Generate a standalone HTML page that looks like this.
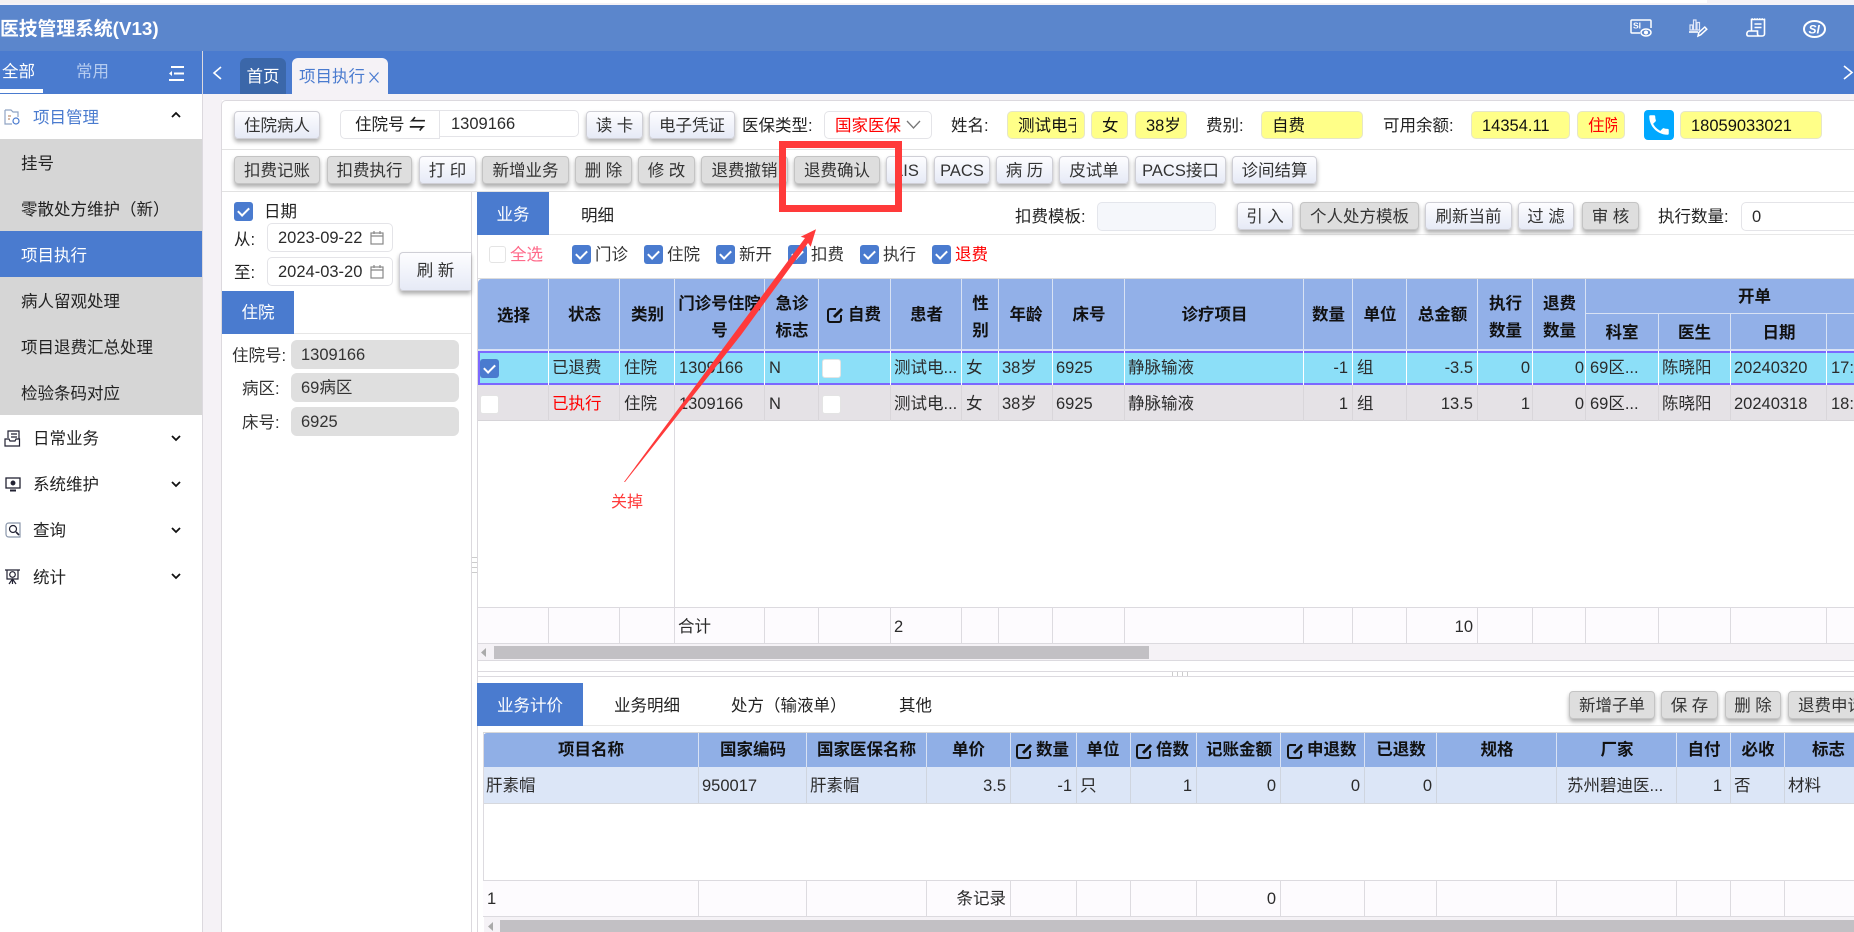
<!DOCTYPE html>
<html lang="zh"><head><meta charset="utf-8"><title>医技管理系统</title>
<style>
html,body{margin:0;padding:0;width:1854px;height:932px;overflow:hidden;background:#fff}
body{position:relative;font-family:"Liberation Sans","Noto Sans CJK SC",sans-serif;font-size:16.5px;color:#2b2b2b}
div{box-sizing:border-box}
.r{position:absolute}
.t{position:absolute;white-space:nowrap;line-height:24px;height:24px;margin-top:1px}
.e{text-align:right}
.h{font-weight:bold;color:#111;text-align:center}
.b{position:absolute;height:28px;border:1px solid #cfcfd6;border-radius:4px;background:linear-gradient(#fdfdff,#e6eaf6);box-shadow:0 3px 4px rgba(0,0,0,.32);text-align:center;line-height:28px;white-space:nowrap;color:#333;overflow:hidden}
.g{background:#dedede;border-color:#c4c4c4}
.y{position:absolute;top:111px;height:28px;background:#ffff88;border:1px solid #e6e6c8;border-radius:5px;line-height:28px;padding-left:10px;white-space:nowrap;overflow:hidden;color:#111}
.y span{display:inline-block;overflow:hidden;vertical-align:top}
.i{position:absolute;height:29px;border:1px solid #e4e4e8;border-radius:5px;background:#fff;line-height:29px;padding-left:10px;white-space:nowrap}
.q{position:absolute;left:291px;width:168px;height:29px;background:#dfdfdf;border-radius:6px;line-height:31px;padding-left:10px;color:#333}
.m{position:absolute;left:21px;white-space:nowrap;line-height:24px;color:#222;margin-top:1px}
.cb{position:absolute;width:19px;height:19px;border-radius:3px;background:#4a7bcf}
.cb:after{content:"";position:absolute;left:6px;top:3px;width:5px;height:9px;border:solid #fff;border-width:0 2px 2px 0;transform:rotate(45deg)}
.u{position:absolute;width:19px;height:19px;border-radius:3px;background:#fff;border:1px solid #e4e4e4}
svg{position:absolute;overflow:visible}
</style></head><body>

<!-- top strip -->
<div class="r" style="left:0;top:0;width:100px;height:5px;background:#f5f1f1"></div>
<div class="r" style="left:1707px;top:0;width:147px;height:5px;background:#f5f2f6"></div>
<div class="r" style="left:0;top:3px;width:1854px;height:2px;background:#f5f2f6"></div>
<!-- header -->
<div class="r" style="left:0;top:5px;width:1854px;height:46px;background:#5b86cc"></div>
<div class="t" style="left:0;top:16px;color:#fff;font-weight:bold;font-size:18.8px">医技管理系统(V13)</div>

<!-- header icons -->
<svg style="left:1630px;top:19px" width="22" height="18" viewBox="0 0 22 18" fill="none" stroke="#fff" stroke-width="1.5"><path d="M10 14H2c-.6 0-1-.4-1-1V2c0-.6.4-1 1-1h18c.6 0 1 .4 1 1v7"/><ellipse cx="16" cy="13.500" rx="5" ry="3.500"/><circle cx="16" cy="13.500" r="1.300" fill="#fff"/><text x="3" y="9.500" fill="#fff" stroke="none" font-size="8.500" font-weight="bold" font-family="Liberation Sans">SI</text></svg>
<svg style="left:1689px;top:19px" width="18" height="18" viewBox="0 0 18 18" fill="none" stroke="#fff" stroke-width="1.200"><path d="M1 6v5h2.500V6zM4.500 1v10h2.500V1zM8 3.500V11h2.500V3.500z" stroke="#dfe6f8"/><path d="M0 13h9" stroke-width="1.600"/><path d="M9 17l.8-3.500 6-5.500 2 2.200-6 5.500z" stroke-width="1.500"/></svg>
<svg style="left:1746px;top:18px" width="20" height="19" viewBox="0 0 20 19" fill="none" stroke="#fff" stroke-width="1.600"><path d="M5.500 13V1.500h13V16c0 1.200-1 2-2.200 2H2.500C1.300 18 .8 17 .8 16c0-1.500 1-3 2.200-3h8.500v3c0 1 .8 2 2 2"/><path d="M8.500 6h7M8.500 9.500h7"/><path d="M5.500 1h13" stroke-dasharray="1.500 1"/></svg>
<svg style="left:1803px;top:20px" width="23" height="18" viewBox="0 0 23 18" fill="none" stroke="#fff" stroke-width="2"><ellipse cx="11.500" cy="9" rx="10.500" ry="8"/><text x="5.500" y="13.500" fill="#fff" stroke="none" font-size="12" font-style="italic" font-weight="bold" font-family="Liberation Sans">SI</text></svg>

<!-- tab bar -->
<div class="r" style="left:0;top:51px;width:1854px;height:43px;background:#4a7bcf"></div>
<div class="r" style="left:202px;top:51px;width:1px;height:881px;background:#dcd9de"></div>
<svg style="left:212px;top:66px" width="10" height="14" fill="none" stroke="#fff" stroke-width="1.6"><path d="M9 1L2 7l7 6"/></svg>
<div class="r" style="left:240px;top:58px;width:46px;height:36px;background:#3b67a9;border-radius:6px 6px 0 0;color:#fff;text-align:center;line-height:38px">首页</div>
<div class="r" style="left:292px;top:58px;width:96px;height:36px;background:#f5f2f6;border-radius:6px 6px 0 0;color:#4a7bcf;line-height:38px;padding-left:7px;white-space:nowrap">项目执行</div>
<svg style="left:369px;top:72px" width="10" height="11" fill="none" stroke="#4a7bcf" stroke-width="1.200"><path d="M.5.500l9 10M9.500.500l-9 10"/></svg>
<svg style="left:1843px;top:65px" width="11" height="15" fill="none" stroke="#fff" stroke-width="1.6"><path d="M1 1l8 6.500L1 14"/></svg>

<!-- sidebar -->
<div class="t" style="left:2px;top:59px;color:#fff">全部</div>
<div class="t" style="left:76px;top:59px;color:#b4cbf0">常用</div>
<div class="r" style="left:0;top:89px;width:43px;height:4px;background:#fff"></div>
<svg style="left:168px;top:66px" width="17" height="16" fill="none" stroke="#fff" stroke-width="2"><path d="M3 1h13M6 7.500h10M1 14h15"/><path d="M4 5L1 7.500 4 10z" fill="#fff" stroke="none"/></svg>

<svg style="left:4px;top:109px" width="17" height="16" fill="none" stroke="#8fa4c4" stroke-width="1.2"><path d="M1 1h6l2 2h5v5M1 1v14h7"/><circle cx="12" cy="12" r="3" stroke="#4a7bcf"/><path d="M4 7h3M4 10h2" stroke="#c09070"/></svg>
<div class="t" style="left:33px;top:105px;color:#4a7bcf">项目管理</div>
<svg style="left:171px;top:112px" width="10" height="6" fill="none" stroke="#111" stroke-width="1.800"><path d="M1 5l4-4 4 4"/></svg>

<div class="r" style="left:0;top:139px;width:202px;height:276px;background:#d6d6d6"></div>
<div class="r" style="left:0;top:231px;width:202px;height:46px;background:#4a7bcf"></div>
<div class="m" style="top:151px">挂号</div>
<div class="m" style="top:197px">零散处方维护（新）</div>
<div class="m" style="top:243px;color:#fff">项目执行</div>
<div class="m" style="top:289px">病人留观处理</div>
<div class="m" style="top:335px">项目退费汇总处理</div>
<div class="m" style="top:381px">检验条码对应</div>

<svg style="left:4px;top:430px" width="17" height="17" fill="none" stroke="#223" stroke-width="1.200"><path d="M4 8V1h11v8M7 4h6M7 7h6"/><path d="M1 9h4l1 2h5l1-2h3.500v7H1z"/></svg>
<div class="t" style="left:33px;top:426px;color:#222">日常业务</div>
<svg style="left:171px;top:435px" width="10" height="6" fill="none" stroke="#111" stroke-width="1.800"><path d="M1 1l4 4 4-4"/></svg>

<svg style="left:5px;top:477px" width="16" height="15" fill="none" stroke="#223" stroke-width="1.300"><rect x="1" y="1" width="14" height="10"/><circle cx="8" cy="6" r="1.800" fill="#223"/><path d="M5 13.500h6" stroke-width="2"/></svg>
<div class="t" style="left:33px;top:472px;color:#222">系统维护</div>
<svg style="left:171px;top:481px" width="10" height="6" fill="none" stroke="#111" stroke-width="1.800"><path d="M1 1l4 4 4-4"/></svg>

<svg style="left:5px;top:522px" width="16" height="16" fill="none" stroke="#223" stroke-width="1.200"><path d="M4 1h11v14H4c-2 0-3-1-3-3V4c0-2 1-3 3-3z" stroke="#8a97ab"/><circle cx="8" cy="7" r="3.500"/><path d="M11 10l3 3" stroke-width="1.600"/></svg>
<div class="t" style="left:33px;top:518px;color:#222">查询</div>
<svg style="left:171px;top:527px" width="10" height="6" fill="none" stroke="#111" stroke-width="1.800"><path d="M1 1l4 4 4-4"/></svg>

<svg style="left:4px;top:568px" width="17" height="17" fill="none" stroke="#223" stroke-width="1.200"><path d="M1 2h15M3 2v9h11V2"/><circle cx="8.500" cy="6.500" r="2.800"/><path d="M8.500 11v5M5 16l3.500-5 3.500 5"/></svg>
<div class="t" style="left:33px;top:565px;color:#222">统计</div>
<svg style="left:171px;top:573px" width="10" height="6" fill="none" stroke="#111" stroke-width="1.800"><path d="M1 1l4 4 4-4"/></svg>

<!-- gutter -->
<div class="r" style="left:203px;top:94px;width:19px;height:838px;background:#f5f2f6"></div>
<div class="r" style="left:203px;top:94px;width:1651px;height:6px;background:#f5f2f6"></div>
<div class="r" style="left:221px;top:100px;width:1633px;height:832px;background:#fff;border-left:1px solid #dcd9de;border-top:1px solid #dcd9de;border-top-left-radius:5px"></div>
<div class="r" style="left:222px;top:149px;width:1632px;height:1px;background:#e2e2e2"></div>
<div class="r" style="left:222px;top:191px;width:1632px;height:1px;background:#e2e2e2"></div>

<!-- row 1 -->
<div class="b" style="left:234px;top:111px;width:86px">住院病人</div>
<div class="i" style="left:340px;top:110px;width:100px;border-radius:5px 0 0 5px;padding-left:14px;color:#222">住院号 <b>⇋</b></div>
<div class="i" style="left:440px;top:110px;width:139px;height:27px;border-left:0;border-radius:0 5px 5px 0;line-height:27px;padding-left:11px">1309166</div>
<div class="b" style="left:586px;top:111px;width:57px">读 卡</div>
<div class="b" style="left:649px;top:111px;width:86px">电子凭证</div>
<div class="t" style="left:742px;top:113px;color:#222">医保类型:</div>
<div class="i" style="left:824px;top:111px;width:108px;height:28px;color:#f00;line-height:28px">国家医保</div>
<svg style="left:906px;top:120px" width="15" height="9" fill="none" stroke="#777" stroke-width="1.300"><path d="M1 1l6.500 7L14 1"/></svg>
<div class="t" style="left:951px;top:113px;color:#222">姓名:</div>
<div class="y" style="left:1007px;width:78px"><span style="width:58px">测试电子</span></div>
<div class="y" style="left:1091px;width:37px">女</div>
<div class="y" style="left:1135px;width:52px">38岁</div>
<div class="t" style="left:1206px;top:113px;color:#222">费别:</div>
<div class="y" style="left:1261px;width:102px">自费</div>
<div class="t" style="left:1383px;top:113px;color:#222">可用余额:</div>
<div class="y" style="left:1471px;width:99px">14354.11</div>
<div class="y" style="left:1577px;width:48px;color:#f00"><span style="width:29px">住院</span></div>
<div class="r" style="left:1644px;top:110px;width:30px;height:30px;background:#00a8ff;border-radius:4px"></div>
<svg style="left:1646px;top:112px" width="26" height="26" viewBox="0 0 24 24"><path fill="#fff" d="M6.600 10.800c1.400 2.800 3.800 5.100 6.600 6.600l2.200-2.200c.3-.3.7-.4 1-.2 1.100.4 2.300.6 3.600.6.600 0 1 .4 1 1V20c0 .6-.4 1-1 1C10.600 21 3 13.400 3 4c0-.6.4-1 1-1h3.500c.6 0 1 .4 1 1 0 1.300.2 2.500.6 3.600.1.300 0 .7-.2 1z"/></svg>
<div class="y" style="left:1680px;width:142px">18059033021</div>

<!-- row 2 -->
<div class="b g" style="left:234px;top:156px;width:86px">扣费记账</div>
<div class="b g" style="left:327px;top:156px;width:85px">扣费执行</div>
<div class="b" style="left:419px;top:156px;width:57px">打 印</div>
<div class="b g" style="left:482px;top:156px;width:87px">新增业务</div>
<div class="b g" style="left:575px;top:156px;width:57px">删 除</div>
<div class="b g" style="left:638px;top:156px;width:57px">修 改</div>
<div class="b g" style="left:701px;top:156px;width:87px">退费撤销</div>
<div class="b g" style="left:794px;top:156px;width:86px">退费确认</div>
<div class="b" style="left:886px;top:156px;width:41px">LIS</div>
<div class="b" style="left:934px;top:156px;width:56px">PACS</div>
<div class="b" style="left:996px;top:156px;width:57px">病 历</div>
<div class="b" style="left:1059px;top:156px;width:70px">皮试单</div>
<div class="b" style="left:1135px;top:156px;width:91px">PACS接口</div>
<div class="b" style="left:1232px;top:156px;width:85px">诊间结算</div>

<!-- left panel -->
<div class="r" style="left:471px;top:192px;width:1px;height:740px;background:#dcd9de"></div>
<div class="r" style="left:477px;top:192px;width:1px;height:740px;background:#dcd9de"></div>
<div class="r" style="left:472px;top:557px;width:5px;height:18px;background:repeating-linear-gradient(#ccc 0 1px,#fff 1px 5px)"></div>
<div class="cb" style="left:234px;top:202px"></div>
<div class="t" style="left:264px;top:199px;color:#222">日期</div>
<div class="t" style="left:234px;top:227px;color:#222">从:</div>
<div class="i" style="left:267px;top:223px;width:126px">2023-09-22</div>
<svg style="left:370px;top:230px" width="14" height="15" fill="none" stroke="#888" stroke-width="1.200"><rect x="1" y="3" width="12" height="11"/><path d="M1 6h12M4 1v3M10 1v3"/></svg>
<div class="t" style="left:234px;top:260px;color:#222">至:</div>
<div class="i" style="left:267px;top:257px;width:126px">2024-03-20</div>
<svg style="left:370px;top:264px" width="14" height="15" fill="none" stroke="#888" stroke-width="1.200"><rect x="1" y="3" width="12" height="11"/><path d="M1 6h12M4 1v3M10 1v3"/></svg>
<div class="b" style="left:399px;top:252px;width:72px;height:39px;line-height:36px;border-right:0;border-radius:4px 0 0 4px">刷 新</div>
<div class="r" style="left:222px;top:291px;width:72px;height:43px;background:#4a7bcf;color:#fff;text-align:center;line-height:44px">住院</div>
<div class="r" style="left:294px;top:333px;width:177px;height:1px;background:#e6e6e6"></div>
<div class="t" style="left:232px;top:343px;color:#333">住院号:</div>
<div class="q" style="top:340px">1309166</div>
<div class="t" style="left:242px;top:376px;color:#333">病区:</div>
<div class="q" style="top:373px">69病区</div>
<div class="t" style="left:242px;top:410px;color:#333">床号:</div>
<div class="q" style="top:407px">6925</div>

<!-- right tabs -->
<div class="r" style="left:477px;top:192px;width:72px;height:43px;background:#4a7bcf;color:#fff;text-align:center;line-height:47px">业务</div>
<div class="t" style="left:581px;top:203px;color:#222">明细</div>
<div class="r" style="left:549px;top:234px;width:1305px;height:1px;background:#e8e8e8"></div>
<div class="t" style="left:1015px;top:204px;color:#222">扣费模板:</div>
<div class="r" style="left:1097px;top:202px;width:119px;height:29px;background:#f5f7fb;border:1px solid #e4e6ec;border-radius:5px"></div>
<div class="b" style="left:1237px;top:202px;width:56px">引 入</div>
<div class="b g" style="left:1300px;top:202px;width:119px">个人处方模板</div>
<div class="b" style="left:1425px;top:202px;width:87px">刷新当前</div>
<div class="b" style="left:1518px;top:202px;width:56px">过 滤</div>
<div class="b g" style="left:1582px;top:202px;width:57px">审 核</div>
<div class="t" style="left:1658px;top:204px;color:#222">执行数量:</div>
<div class="i" style="left:1741px;top:202px;width:130px">0</div>

<!-- checkbox row -->
<div class="u" style="left:489px;top:246px;width:17px;height:17px"></div>
<div class="t" style="left:510px;top:242px;color:#ff6a8a">全选</div>
<div class="cb" style="left:572px;top:245px"></div><div class="t" style="left:595px;top:242px;color:#333">门诊</div>
<div class="cb" style="left:644px;top:245px"></div><div class="t" style="left:667px;top:242px;color:#333">住院</div>
<div class="cb" style="left:716px;top:245px"></div><div class="t" style="left:739px;top:242px;color:#333">新开</div>
<div class="cb" style="left:788px;top:245px"></div><div class="t" style="left:811px;top:242px;color:#333">扣费</div>
<div class="cb" style="left:860px;top:245px"></div><div class="t" style="left:883px;top:242px;color:#333">执行</div>
<div class="cb" style="left:932px;top:245px"></div><div class="t" style="left:955px;top:242px;color:#f00">退费</div>

<!-- table 1 backgrounds -->
<div class="r" style="left:478px;top:278px;width:1376px;height:1px;background:#dcdcdc"></div>
<div class="r" style="left:478px;top:279px;width:1376px;height:70px;background:#92b0e8;border-radius:4px 0 0 0"></div>
<div class="r" style="left:478px;top:351px;width:1376px;height:34px;background:#8cdff8;border-top:2px solid #7b68ff;border-bottom:2px solid #7b68ff;border-left:2px solid #7b68ff"></div>
<div class="r" style="left:478px;top:385px;width:1376px;height:36px;background:#e5e2e6;border-bottom:1px solid #d6d4d8"></div>
<div class="r" style="left:478px;top:607px;width:1376px;height:37px;background:#fdfbfe;border-top:1px solid #dcdadf;border-bottom:1px solid #dcdadf"></div>
<div class="r" style="left:478px;top:644px;width:1376px;height:17px;background:#f5f2f6;border-bottom:1px solid #dcdadf"></div>
<div class="r" style="left:494px;top:646px;width:655px;height:13px;background:#c2c0c4"></div>
<svg style="left:481px;top:648px" width="6" height="9"><path d="M5 0L0 4.500 5 9z" fill="#aaa"/></svg>
<div class="r" style="left:478px;top:671px;width:1376px;height:6px;border-top:1px solid #dcdadf;border-bottom:1px solid #dcdadf"></div>
<div class="r" style="left:1172px;top:672px;width:17px;height:4px;background:repeating-linear-gradient(90deg,#ccc 0 1px,#fff 1px 5px)"></div>

<svg style="left:0;top:0" width="1854" height="932" fill="none" shape-rendering="crispEdges">
<path stroke="#d8e2f4" d="M548.500 279V349M619.500 279V349M674.500 279V349M764.500 279V349M818.500 279V349M890.500 279V349M961.500 279V349M998.500 279V349M1052.500 279V349M1124.500 279V349M1303.500 279V349M1352.500 279V349M1406.500 279V349M1477.500 279V349M1532.500 279V349M1585.500 279V349M1658.500 313V349M1730.500 313V349M1826.500 313V349M1586 313.500H1854"/>
<path stroke="#d8e2f4" d="M478 349.500H1854M478 350.500H1854"/>
<path stroke="#fff" d="M548.500 351V385M619.500 351V385M674.500 351V385M764.500 351V385M818.500 351V385M890.500 351V385M961.500 351V385M998.500 351V385M1052.500 351V385M1124.500 351V385M1303.500 351V385M1352.500 351V385M1406.500 351V385M1477.500 351V385M1532.500 351V385M1585.500 351V385M1658.500 351V385M1730.500 351V385M1826.500 351V385"/>
<path stroke="#d9d6da" d="M548.500 385V421M619.500 385V421M674.500 385V421M764.500 385V421M818.500 385V421M890.500 385V421M961.500 385V421M998.500 385V421M1052.500 385V421M1124.500 385V421M1303.500 385V421M1352.500 385V421M1406.500 385V421M1477.500 385V421M1532.500 385V421M1585.500 385V421M1658.500 385V421M1730.500 385V421M1826.500 385V421"/>
<path stroke="#dddbe0" d="M674.500 421V643M548.500 607V643M619.500 607V643M764.500 607V643M818.500 607V643M890.500 607V643M961.500 607V643M998.500 607V643M1052.500 607V643M1124.500 607V643M1303.500 607V643M1352.500 607V643M1406.500 607V643M1477.500 607V643M1532.500 607V643M1585.500 607V643M1658.500 607V643M1730.500 607V643M1826.500 607V643"/>
</svg>

<!-- table 1 header text -->
<div class="t h" style="left:478px;width:71px;top:303px">选择</div>
<div class="t h" style="left:549px;width:71px;top:302px">状态</div>
<div class="t h" style="left:620px;width:55px;top:302px">类别</div>
<div class="r" style="left:675px;top:291px;width:89px;text-align:center;font-weight:bold;color:#111;line-height:27px;overflow:hidden;height:54px;white-space:nowrap">门诊号住院<br>号</div>
<div class="r" style="left:765px;top:291px;width:54px;text-align:center;font-weight:bold;color:#111;line-height:27px">急诊<br>标志</div>
<svg style="left:827px;top:306px" width="17" height="17" fill="none" stroke="#111" stroke-width="2"><path d="M9 3H3c-1 0-2 1-2 2v9c0 1 1 2 2 2h9c1 0 2-1 2-2V9"/><path d="M7 11l8-8" stroke-width="3"/></svg>
<div class="t" style="left:848px;top:302px;font-weight:bold;color:#111">自费</div>
<div class="t h" style="left:891px;width:71px;top:302px">患者</div>
<div class="r" style="left:962px;top:291px;width:37px;text-align:center;font-weight:bold;color:#111;line-height:27px">性<br>别</div>
<div class="t h" style="left:999px;width:54px;top:302px">年龄</div>
<div class="t h" style="left:1053px;width:72px;top:302px">床号</div>
<div class="t h" style="left:1125px;width:179px;top:302px">诊疗项目</div>
<div class="t h" style="left:1304px;width:49px;top:302px">数量</div>
<div class="t h" style="left:1353px;width:54px;top:302px">单位</div>
<div class="t h" style="left:1407px;width:71px;top:302px">总金额</div>
<div class="r" style="left:1478px;top:291px;width:55px;text-align:center;font-weight:bold;color:#111;line-height:27px">执行<br>数量</div>
<div class="r" style="left:1533px;top:291px;width:53px;text-align:center;font-weight:bold;color:#111;line-height:27px">退费<br>数量</div>
<div class="t h" style="left:1586px;width:337px;top:284px">开单</div>
<div class="t h" style="left:1586px;width:72px;top:320px">科室</div>
<div class="t h" style="left:1658px;width:73px;top:320px">医生</div>
<div class="t h" style="left:1731px;width:96px;top:320px">日期</div>

<!-- table 1 row 1 -->
<div class="cb" style="left:480px;top:359px"></div>
<div class="t" style="left:552px;top:355px">已退费</div>
<div class="t" style="left:624px;top:355px">住院</div>
<div class="t" style="left:679px;top:355px">1309166</div>
<div class="t" style="left:769px;top:355px">N</div>
<div class="u" style="left:822px;top:359px"></div>
<div class="t" style="left:894px;top:355px">测试电...</div>
<div class="t" style="left:966px;top:355px">女</div>
<div class="t" style="left:1002px;top:355px">38岁</div>
<div class="t" style="left:1056px;top:355px">6925</div>
<div class="t" style="left:1128px;top:355px">静脉输液</div>
<div class="t e" style="left:1304px;width:44px;top:355px">-1</div>
<div class="t" style="left:1357px;top:355px">组</div>
<div class="t e" style="left:1407px;width:66px;top:355px">-3.5</div>
<div class="t e" style="left:1478px;width:52px;top:355px">0</div>
<div class="t e" style="left:1533px;width:51px;top:355px">0</div>
<div class="t" style="left:1590px;top:355px">69区...</div>
<div class="t" style="left:1662px;top:355px">陈晓阳</div>
<div class="t" style="left:1734px;top:355px">20240320</div>
<div class="t" style="left:1831px;top:355px">17:</div>

<!-- table 1 row 2 -->
<div class="u" style="left:480px;top:395px"></div>
<div class="t" style="left:552px;top:391px;color:#f00">已执行</div>
<div class="t" style="left:624px;top:391px">住院</div>
<div class="t" style="left:679px;top:391px">1309166</div>
<div class="t" style="left:769px;top:391px">N</div>
<div class="u" style="left:822px;top:395px"></div>
<div class="t" style="left:894px;top:391px">测试电...</div>
<div class="t" style="left:966px;top:391px">女</div>
<div class="t" style="left:1002px;top:391px">38岁</div>
<div class="t" style="left:1056px;top:391px">6925</div>
<div class="t" style="left:1128px;top:391px">静脉输液</div>
<div class="t e" style="left:1304px;width:44px;top:391px">1</div>
<div class="t" style="left:1357px;top:391px">组</div>
<div class="t e" style="left:1407px;width:66px;top:391px">13.5</div>
<div class="t e" style="left:1478px;width:52px;top:391px">1</div>
<div class="t e" style="left:1533px;width:51px;top:391px">0</div>
<div class="t" style="left:1590px;top:391px">69区...</div>
<div class="t" style="left:1662px;top:391px">陈晓阳</div>
<div class="t" style="left:1734px;top:391px">20240318</div>
<div class="t" style="left:1831px;top:391px">18:</div>

<!-- table 1 footer -->
<div class="t" style="left:678px;top:614px">合计</div>
<div class="t" style="left:894px;top:614px">2</div>
<div class="t e" style="left:1407px;width:66px;top:614px">10</div>

<!-- bottom tabs -->
<div class="r" style="left:477px;top:683px;width:106px;height:43px;background:#4a7bcf;color:#fff;text-align:center;line-height:46px">业务计价</div>
<div class="r" style="left:583px;top:725px;width:1271px;height:1px;background:#e8e8e8"></div>
<div class="t" style="left:614px;top:693px;color:#222">业务明细</div>
<div class="t" style="left:731px;top:693px;color:#222">处方（输液单）</div>
<div class="t" style="left:899px;top:693px;color:#222">其他</div>
<div class="b g" style="left:1569px;top:691px;width:86px">新增子单</div>
<div class="b g" style="left:1661px;top:691px;width:57px">保 存</div>
<div class="b g" style="left:1725px;top:691px;width:56px">删 除</div>
<div class="b g" style="left:1788px;top:691px;width:86px">退费申请</div>

<!-- table 2 -->
<div class="r" style="left:483px;top:732px;width:1371px;height:1px;background:#d8d8d8"></div>
<div class="r" style="left:483px;top:733px;width:1371px;height:34px;background:#90afe6;border-radius:4px 0 0 0"></div>
<div class="r" style="left:483px;top:767px;width:1371px;height:37px;background:#dce6f7;border-bottom:1px solid #d6d8dd"></div>
<div class="r" style="left:483px;top:733px;width:1px;height:183px;background:#dddbe0"></div>
<div class="r" style="left:483px;top:880px;width:1371px;height:37px;background:#fdfbfe;border-top:1px solid #dcdadf;border-bottom:1px solid #dcdadf"></div>
<div class="r" style="left:484px;top:917px;width:1370px;height:15px;background:#f5f2f6"></div>
<div class="r" style="left:500px;top:920px;width:1354px;height:12px;background:#c2c0c4"></div>
<svg style="left:488px;top:922px" width="6" height="9"><path d="M5 0L0 4.500 5 9z" fill="#aaa"/></svg>

<svg style="left:0;top:0" width="1854" height="932" fill="none" shape-rendering="crispEdges">
<path stroke="#d8e2f4" d="M698.500 733V767M806.500 733V767M926.500 733V767M1010.500 733V767M1076.500 733V767M1130.500 733V767M1196.500 733V767M1280.500 733V767M1364.500 733V767M1436.500 733V767M1556.500 733V767M1676.500 733V767M1730.500 733V767M1784.500 733V767"/>
<path stroke="#cfd5df" d="M698.500 767V803M806.500 767V803M926.500 767V803M1010.500 767V803M1076.500 767V803M1130.500 767V803M1196.500 767V803M1280.500 767V803M1364.500 767V803M1436.500 767V803M1556.500 767V803M1676.500 767V803M1730.500 767V803M1784.500 767V803"/>
<path stroke="#dddbe0" d="M698.500 880V916M806.500 880V916M926.500 880V916M1010.500 880V916M1076.500 880V916M1130.500 880V916M1196.500 880V916M1280.500 880V916M1364.500 880V916M1436.500 880V916M1556.500 880V916M1676.500 880V916M1730.500 880V916M1784.500 880V916"/>
</svg>

<div class="t h" style="left:483px;width:216px;top:737px">项目名称</div>
<div class="t h" style="left:699px;width:108px;top:737px">国家编码</div>
<div class="t h" style="left:807px;width:119px;top:737px">国家医保名称</div>
<div class="t h" style="left:926px;width:85px;top:737px">单价</div>
<svg style="left:1016px;top:742px" width="17" height="17" fill="none" stroke="#111" stroke-width="2"><path d="M9 3H3c-1 0-2 1-2 2v9c0 1 1 2 2 2h9c1 0 2-1 2-2V9"/><path d="M7 11l8-8" stroke-width="3"/></svg>
<div class="t" style="left:1036px;top:737px;font-weight:bold;color:#111">数量</div>
<div class="t h" style="left:1076px;width:54px;top:737px">单位</div>
<svg style="left:1136px;top:742px" width="17" height="17" fill="none" stroke="#111" stroke-width="2"><path d="M9 3H3c-1 0-2 1-2 2v9c0 1 1 2 2 2h9c1 0 2-1 2-2V9"/><path d="M7 11l8-8" stroke-width="3"/></svg>
<div class="t" style="left:1156px;top:737px;font-weight:bold;color:#111">倍数</div>
<div class="t h" style="left:1197px;width:84px;top:737px">记账金额</div>
<svg style="left:1287px;top:742px" width="17" height="17" fill="none" stroke="#111" stroke-width="2"><path d="M9 3H3c-1 0-2 1-2 2v9c0 1 1 2 2 2h9c1 0 2-1 2-2V9"/><path d="M7 11l8-8" stroke-width="3"/></svg>
<div class="t" style="left:1307px;top:737px;font-weight:bold;color:#111">申退数</div>
<div class="t h" style="left:1365px;width:72px;top:737px">已退数</div>
<div class="t h" style="left:1437px;width:120px;top:737px">规格</div>
<div class="t h" style="left:1557px;width:120px;top:737px">厂家</div>
<div class="t h" style="left:1677px;width:54px;top:737px">自付</div>
<div class="t h" style="left:1731px;width:54px;top:737px">必收</div>
<div class="t h" style="left:1785px;width:87px;top:737px">标志</div>

<div class="t" style="left:486px;top:773px">肝素帽</div>
<div class="t" style="left:702px;top:773px">950017</div>
<div class="t" style="left:810px;top:773px">肝素帽</div>
<div class="t e" style="left:926px;width:80px;top:773px">3.5</div>
<div class="t e" style="left:1011px;width:61px;top:773px">-1</div>
<div class="t" style="left:1080px;top:773px">只</div>
<div class="t e" style="left:1131px;width:61px;top:773px">1</div>
<div class="t e" style="left:1197px;width:79px;top:773px">0</div>
<div class="t e" style="left:1281px;width:79px;top:773px">0</div>
<div class="t e" style="left:1365px;width:67px;top:773px">0</div>
<div class="t" style="left:1567px;top:773px">苏州碧迪医...</div>
<div class="t e" style="left:1677px;width:45px;top:773px">1</div>
<div class="t" style="left:1734px;top:773px">否</div>
<div class="t" style="left:1788px;top:773px">材料</div>

<div class="t" style="left:487px;top:886px">1</div>
<div class="t e" style="left:926px;width:80px;top:886px">条记录</div>
<div class="t e" style="left:1197px;width:79px;top:886px">0</div>

<!-- annotations -->
<div class="r" style="left:779px;top:141px;width:123px;height:71px;border:7px solid #ff3a3a"></div>
<svg style="left:0;top:0" width="1854" height="932"><path fill="#ff3a3a" d="M624 482L733 335 805 238 800.700 236.700 816 229.300 810.700 246.700 808 243 741 335 625 482z"/></svg>
<div class="t" style="left:611px;top:490px;color:#ff3a3a;font-size:16px">关掉</div>

</body></html>
